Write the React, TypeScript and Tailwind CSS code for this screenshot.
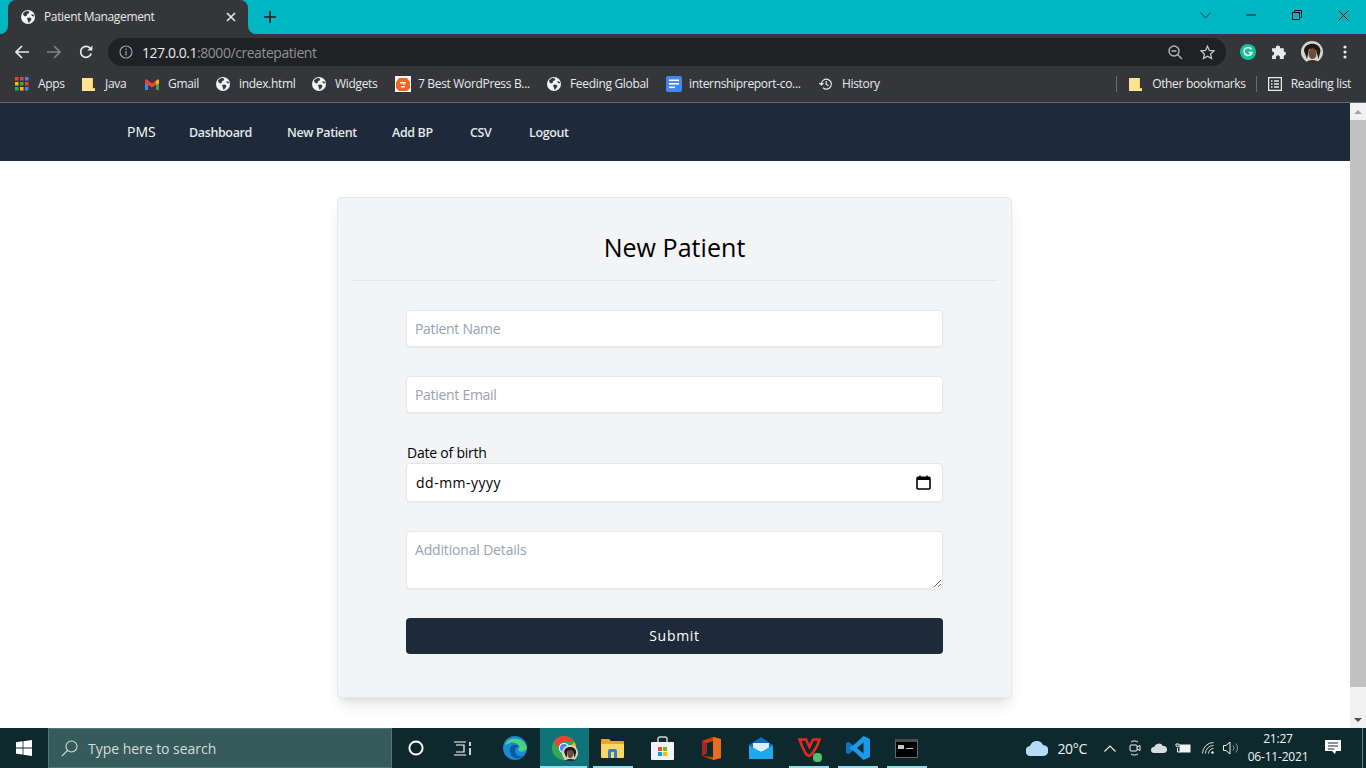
import React from "react";

const Globe = () => (
  <svg width="14" height="14" viewBox="0 0 14 14" className="shrink-0">
    <circle cx="7" cy="7" r="7" fill="#f1f3f4" />
    <path d="M2 3.2 L5.2 1 L8.4 1.6 L7.6 3.6 L5.8 4.2 L6 5.6 L4.4 6.4 L2.6 5.4 Z M6 8 L9 7.6 L10.6 9 L9.4 11 L7.6 13 L6.8 10.4 Z M10.4 4 L13 5 L12.6 6.6 L10.8 6 Z" fill="#35363a" />
  </svg>
);

const Folder = () => (
  <svg width="13" height="15" viewBox="0 0 13 15" className="shrink-0">
    <path d="M0 1 H10 V11 H13 V14 H0 Z" fill="#fde293" />
    <path d="M10 1 H11 V11 H13 V12 H10 Z" fill="#f9cf5a" />
  </svg>
);

const AppsIcon = () => (
  <svg width="14" height="14" viewBox="0 0 14 14" className="shrink-0">
    <rect x="0" y="0" width="3.5" height="3.5" fill="#ea4335" />
    <rect x="5" y="0" width="3.5" height="3.5" fill="#ea4335" />
    <rect x="10" y="0" width="3.5" height="3.5" fill="#4285f4" />
    <rect x="0" y="5" width="3.5" height="3.5" fill="#fbbc04" />
    <rect x="5" y="5" width="3.5" height="3.5" fill="#34a853" />
    <rect x="10" y="5" width="3.5" height="3.5" fill="#ea4335" />
    <rect x="0" y="10" width="3.5" height="3.5" fill="#34a853" />
    <rect x="5" y="10" width="3.5" height="3.5" fill="#fbbc04" />
    <rect x="10" y="10" width="3.5" height="3.5" fill="#4285f4" />
  </svg>
);

const GmailIcon = () => (
  <svg width="14" height="11" viewBox="0 0 14 11" className="shrink-0">
    <path d="M0 1 V11 H3 V4 Z" fill="#4285f4" />
    <path d="M14 1 V11 H11 V4 Z" fill="#34a853" />
    <path d="M0 1 L1.5 0 L7 4.4 L12.5 0 L14 1 V4 L11 6 L7 8.6 L3 6 L0 4 Z" fill="#ea4335" />
    <path d="M11 2 L14 0.6 V4 L11 6 Z" fill="#fbbc04" />
  </svg>
);

const BloggerIcon = () => (
  <svg width="16" height="16" viewBox="0 0 16 16" className="shrink-0">
    <rect width="16" height="16" fill="#fff" />
    <path d="M4 2 H12 L15 6 V12 L12 15 H4 L1 12 V6 Z" fill="#f26522" />
    <rect x="5" y="6" width="6" height="1.5" fill="#fff" />
    <rect x="6" y="10" width="4" height="1.5" fill="#fff" />
    <rect x="8" y="8" width="1.5" height="1" fill="#fff" />
  </svg>
);

const DocsIcon = () => (
  <svg width="16" height="16" viewBox="0 0 16 16" className="shrink-0">
    <rect width="16" height="16" rx="2" fill="#4285f4" />
    <rect x="3" y="3.5" width="10" height="1.6" fill="#fff" />
    <rect x="3" y="7" width="10" height="1.6" fill="#fff" />
    <rect x="3" y="10.5" width="6" height="1.6" fill="#fff" />
  </svg>
);

const HistoryIcon = () => (
  <svg width="14" height="14" viewBox="0 0 14 14" fill="none" stroke="#e8eaed" strokeWidth="1.2" className="shrink-0">
    <path d="M2.4 7 A5 5 0 1 1 4 10.8" />
    <path d="M0.4 6 L2.4 8 L4.4 6" />
    <path d="M7.2 4 V7.4 L9.6 8.8" />
  </svg>
);

const ReadingIcon = () => (
  <svg width="14" height="14" viewBox="0 0 14 14" fill="none" stroke="#e8eaed" strokeWidth="1.3" className="shrink-0">
    <rect x="0.6" y="0.6" width="12.8" height="12.8" />
    <path d="M3 4 H4.5 M6 4 H11 M3 7 H4.5 M6 7 H11 M3 10 H4.5 M6 10 H11" />
  </svg>
);

const Avatar = ({ size }: { size: number }) => (
  <svg width={size} height={size} viewBox="0 0 22 22" className="shrink-0">
    <circle cx="11" cy="11" r="11" fill="#d8d4ce" />
    <path d="M3 10 C3 1 19 0 19.5 10 L17.5 18 L15 9 L8 8 L6 18 Z" fill="#1f1a17" />
    <ellipse cx="11.5" cy="12.5" rx="4" ry="5.5" fill="#6e4c3c" />
    <path d="M5 22 C6 18 17 18 18 22 Z" fill="#3a2e2a" />
  </svg>
);

const Bookmark = ({ icon, label, cls }: { icon: React.ReactNode; label: string; cls: string }) => (
  <div className={`flex items-center ${cls}`}>
    <div className="w-[23px] flex items-center shrink-0">{icon}</div>
    <span className="whitespace-nowrap">{label}</span>
  </div>
);

const Field = ({ placeholder }: { placeholder: string }) => (
  <input
    placeholder={placeholder}
    className="block w-full h-[37px] bg-white border border-gray-200 rounded shadow-xs px-2 text-sm tracking-[-0.3px] placeholder:text-gray-400 outline-none"
  />
);

const Tile = ({ children, line, active }: { children?: React.ReactNode; line?: string; active?: boolean }) => (
  <div className={`relative w-[49px] h-10 flex items-center justify-center shrink-0 ${active ? "bg-[#0e7477]" : ""}`}>
    {children}
    {line === "full" && <div className="absolute bottom-0 left-0 w-[47px] h-[2px] bg-[#8fdfe6]" />}
    {line === "open" && <div className="absolute bottom-0 left-[4px] w-[40px] h-[2px] bg-[#8fdfe6]" />}
  </div>
);

export default function App() {
  return (
    <div className="w-[1366px] h-[768px] overflow-hidden flex flex-col bg-white font-['Open_Sans',sans-serif]">
      {/* tab strip */}
      <div className="h-[34px] bg-[#00b7c3] flex shrink-0 pl-2 text-[12px] text-[#e8eaed]">
        <div className="relative w-[240px] h-[34px] bg-[#35363a] rounded-t-lg flex items-center pl-[13px]">
          <svg width="8" height="8" className="absolute left-[-8px] bottom-0"><path d="M8 0 A8 8 0 0 1 0 8 H8 Z" fill="#35363a" /></svg>
          <svg width="8" height="8" className="absolute right-[-8px] bottom-0"><path d="M0 0 A8 8 0 0 0 8 8 H0 Z" fill="#35363a" /></svg>
          <Globe />
          <span className="ml-[9px] tracking-[-0.36px] whitespace-nowrap">Patient Management</span>
          <svg width="10" height="10" viewBox="0 0 10 10" className="ml-[72px]" stroke="#e8eaed" strokeWidth="1.6"><path d="M1 1 L9 9 M9 1 L1 9" /></svg>
        </div>
        <div className="ml-[15px] h-[34px] flex items-center">
          <svg width="14" height="14" viewBox="0 0 14 14" stroke="#202124" strokeWidth="1.7"><path d="M7 1 V13 M1 7 H13" /></svg>
        </div>
        <div className="ml-auto flex h-[30px] items-center">
          <div className="w-[46px] flex justify-center">
            <svg width="11" height="7" viewBox="0 0 11 7" fill="none" stroke="#203a40"><path d="M0.5 0.5 L5.5 6 L10.5 0.5" /></svg>
          </div>
          <div className="w-[46px] flex justify-center">
            <svg width="10" height="2" viewBox="0 0 10 2" stroke="#111"><path d="M0 1 H10" /></svg>
          </div>
          <div className="w-[46px] flex justify-center">
            <svg width="10" height="10" viewBox="0 0 10 10" fill="none" stroke="#111"><rect x="0.5" y="2.5" width="7" height="7" /><path d="M2.5 2.5 V0.5 H9.5 V7.5 H7.5" /></svg>
          </div>
          <div className="w-[46px] flex justify-center">
            <svg width="11" height="11" viewBox="0 0 11 11" stroke="#111"><path d="M0.5 0.5 L10.5 10.5 M10.5 0.5 L0.5 10.5" /></svg>
          </div>
        </div>
      </div>

      {/* toolbar */}
      <div className="h-[32px] bg-[#35363a] flex items-end shrink-0">
        <div className="w-[108px] h-[28px] flex items-center pl-[15px] gap-[18px]">
          <svg width="14" height="14" viewBox="0 0 14 14" fill="none" stroke="#e8eaed" strokeWidth="1.7"><path d="M14 7 H1.5 M7 1 L1 7 L7 13" /></svg>
          <svg width="14" height="14" viewBox="0 0 14 14" fill="none" stroke="#7f8184" strokeWidth="1.7"><path d="M0 7 H12.5 M7 1 L13 7 L7 13" /></svg>
          <svg width="14" height="14" viewBox="0 0 14 14" fill="none" stroke="#e8eaed" strokeWidth="1.7"><path d="M12.2 8.4 A5.4 5.4 0 1 1 11 3.2" /><path d="M13.4 0.6 V5.6 H8.4 Z" fill="#e8eaed" stroke="none" /></svg>
        </div>
        <div className="w-[1118px] h-[28px] bg-[#202124] rounded-full flex items-center pl-[11px] pr-[11px]">
          <svg width="14" height="14" viewBox="0 0 14 14" fill="none" stroke="#9aa0a6" strokeWidth="1.2" className="shrink-0"><circle cx="7" cy="7" r="6" /><path d="M7 6 V10.5 M7 3.6 V5" /></svg>
          <span className="ml-[9px] text-[14px] tracking-[-0.45px] text-[#e8eaed]">127.0.0.1<span className="text-[#8f9296]">:8000/createpatient</span></span>
          <svg width="15" height="15" viewBox="0 0 15 15" fill="none" stroke="#b5b8bb" strokeWidth="1.4" className="ml-auto"><circle cx="6" cy="6" r="5" /><path d="M9.8 9.8 L14 14 M3.5 6 H8.5" /></svg>
          <svg width="15" height="15" viewBox="0 0 15 15" fill="none" stroke="#c4c7c9" strokeWidth="1.3" className="ml-[17px]"><path d="M7.5 1.2 L9.4 5.4 L14 5.9 L10.6 9 L11.5 13.6 L7.5 11.3 L3.5 13.6 L4.4 9 L1 5.9 L5.6 5.4 Z" /></svg>
        </div>
        <div className="flex-1 h-[28px] flex items-center pl-[14px]">
          <svg width="16" height="16" viewBox="0 0 16 16" fill="none"><circle cx="8" cy="8" r="8" fill="#15c39a" /><path d="M11.4 5.2 A4 4 0 1 0 12 8.4 H8.6" stroke="#fff" strokeWidth="1.5" /></svg>
          <svg width="16" height="16" viewBox="0 0 15 15" className="ml-[15px]" fill="#e8eaed"><path d="M1 4 H4.6 A2 2 0 1 1 8.4 4 H12 V7 A2 2 0 1 1 12 11 V14 H8 A2 2 0 1 0 5 14 H1 V11 A2 2 0 1 0 1 7 Z" /></svg>
          <div className="ml-[14px]"><Avatar size={22} /></div>
          <svg width="4" height="14" viewBox="0 0 4 14" fill="#e8eaed" className="ml-[20px]"><circle cx="2" cy="2" r="1.6" /><circle cx="2" cy="7" r="1.6" /><circle cx="2" cy="12" r="1.6" /></svg>
        </div>
      </div>

      {/* bookmarks */}
      <div className="h-[37px] bg-[#35363a] border-b border-[#68696c] flex items-center shrink-0 pl-[15px] text-[12px] tracking-[-0.33px] text-[#e8eaed]">
        <Bookmark icon={<AppsIcon />} label="Apps" cls="w-[67px]" />
        <Bookmark icon={<Folder />} label="Java" cls="w-[63px]" />
        <Bookmark icon={<GmailIcon />} label="Gmail" cls="w-[71px]" />
        <Bookmark icon={<Globe />} label="index.html" cls="w-[96px]" />
        <Bookmark icon={<Globe />} label="Widgets" cls="w-[83px]" />
        <Bookmark icon={<BloggerIcon />} label="7 Best WordPress B..." cls="w-[152px]" />
        <Bookmark icon={<Globe />} label="Feeding Global" cls="w-[119px]" />
        <Bookmark icon={<DocsIcon />} label="internshipreport-co..." cls="w-[153px]" />
        <Bookmark icon={<HistoryIcon />} label="History" cls="w-[60px]" />
        <div className="ml-auto flex items-center pr-[15px]">
          <div className="w-px h-4 bg-[#6a6b6e] mr-[12px]" />
          <Bookmark icon={<Folder />} label="Other bookmarks" cls="" />
          <div className="w-px h-4 bg-[#6a6b6e] ml-[10px] mr-[11px]" />
          <Bookmark icon={<ReadingIcon />} label="Reading list" cls="" />
        </div>
      </div>

      {/* page */}
      <div className="flex-1 flex min-h-0">
        <div className="flex-1 min-w-0 bg-white">
          <nav className="h-[58px] bg-gray-800 flex items-center pl-[127px] text-[12.5px] leading-5 font-semibold text-gray-200 tracking-[-0.37px]">
            <span className="w-[62px] text-[14px] font-medium tracking-normal text-white">PMS</span>
            <div className="flex items-center pt-[2px]">
              <span className="w-[98px]">Dashboard</span>
              <span className="w-[105px]">New Patient</span>
              <span className="w-[78px]">Add BP</span>
              <span className="w-[59px]">CSV</span>
              <span>Logout</span>
            </div>
          </nav>
          <div className="ml-[337px] mt-9 w-[675px] h-[501px] bg-gray-100 border border-gray-200 rounded shadow-lg px-[14px]">
            <div className="h-[83px] border-b border-gray-200 flex items-center justify-center pt-[17px]">
              <h1 className="text-[25px] tracking-[0.05px] text-black">New Patient</h1>
            </div>
            <form className="mx-[54px] pt-[29px]">
              <Field placeholder="Patient Name" />
              <div className="mt-[29px]"><Field placeholder="Patient Email" /></div>
              <label className="block mt-[30px] ml-px text-[14px] tracking-[-0.22px] leading-[20px] text-black">Date of birth</label>
              <div className="h-[39px] bg-white border border-gray-200 rounded shadow-xs pl-[9px] pr-[11px] flex items-center justify-between text-sm tracking-[0.5px] text-black">
                <span>dd-mm-yyyy</span>
                <svg width="15" height="15" viewBox="0 0 15 15" fill="none"><rect x="1" y="2.4" width="13" height="11.6" rx="1" stroke="#000" strokeWidth="1.6" /><rect x="1" y="2" width="13" height="3" fill="#000" /><path d="M4 0.6 V3 M11 0.6 V3" stroke="#000" strokeWidth="1.4" /></svg>
              </div>
              <textarea
                placeholder="Additional Details"
                className="block mt-[29px] w-full h-[58px] bg-white border border-gray-200 rounded shadow-xs px-2 py-2 text-sm tracking-[-0.17px] placeholder:text-gray-400 outline-none"
              />
              <button type="button" className="block mt-[29px] w-full h-9 bg-gray-800 rounded text-white text-sm font-medium tracking-wider">Submit</button>
            </form>
          </div>
        </div>
        <div className="w-4 bg-[#f1f1f1] flex flex-col shrink-0">
          <div className="h-[17px] flex items-center justify-center">
            <div className="w-0 h-0 border-x-4 border-x-transparent border-b-4 border-b-[#a3a3a3]" />
          </div>
          <div className="h-[567px] bg-[#c1c1c1]" />
          <div className="flex-1" />
          <div className="h-[17px] flex items-center justify-center">
            <div className="w-0 h-0 border-x-4 border-x-transparent border-t-4 border-t-[#505050]" />
          </div>
        </div>
      </div>

      {/* taskbar */}
      <div className="h-10 bg-[#0e292d] flex items-center shrink-0 text-white">
        <div className="w-12 flex justify-center">
          <svg width="16" height="16" viewBox="0 0 16 16" fill="#fff"><path d="M0 2.3 L6.6 1.3 V7.5 H0 Z M7.4 1.2 L16 0 V7.5 H7.4 Z M0 8.4 H6.6 V14.6 L0 13.7 Z M7.4 8.4 H16 V16 L7.4 14.8 Z" /></svg>
        </div>
        <div className="w-[344px] h-10 bg-[#355b5d] border border-[#54767a] flex items-center pl-[12px] text-[14px] tracking-[-0.03px] text-[#d5dcdc]">
          <svg width="17" height="17" viewBox="0 0 17 17" fill="none" stroke="#d5dcdc" strokeWidth="1.1"><circle cx="10.5" cy="6.5" r="5.5" /><path d="M6.5 10.5 L0.8 16.2" /></svg>
          <span className="ml-[10px]">Type here to search</span>
        </div>
        <div className="ml-[1px] flex">
          <Tile>
            <svg width="16" height="16" viewBox="0 0 16 16" fill="none" stroke="#fff" strokeWidth="2" className="mr-[4px]"><circle cx="8" cy="8" r="6.6" /></svg>
          </Tile>
          <Tile>
            <svg width="18" height="15" viewBox="0 0 18 15" fill="none" stroke="#fff" strokeWidth="1.2" className="mr-[8px]"><path d="M0 1 H12 M2 4 H10 V11 H2 M0 14 H12" /><path d="M16 1 V5 M16 7 V14" strokeWidth="1.6" /></svg>
          </Tile>
          <Tile>
            <svg width="24" height="24" viewBox="0 0 24 24" className="mr-[2px]"><circle cx="12" cy="12" r="12" fill="#1b89d6" /><path d="M2 9 C5 0 20 0 24 11 C24 16 17 17 15 14 C19 10 12 5 7 7 C4 8 3 9 2 9 Z" fill="#49d57f" /><path d="M7 13 C7 9 13 7 17 11 C14 10 12 12 12 15 C12 19 16 21 20 20 C15 25 6 22 7 13 Z" fill="#0c5a9e" /></svg>
          </Tile>
          <Tile active line="full">
            <div className="relative w-[24px] h-[24px] mr-[2px]">
              <svg width="24" height="24" viewBox="0 0 24 24"><circle cx="12" cy="12" r="12" fill="#34a853" /><path d="M12 0 A12 12 0 0 1 22.4 6 L12 6 L5 11 L2 5.4 A12 12 0 0 1 12 0 Z" fill="#ea4335" /><path d="M22.4 6 A12 12 0 0 1 12 24 L17 12 Z" fill="#fbbc04" /><circle cx="12" cy="12" r="5.2" fill="#fff" /><circle cx="12" cy="12" r="4" fill="#4285f4" /></svg>
              <div className="absolute left-[10px] top-[9px] rounded-full"><Avatar size={16} /></div>
            </div>
          </Tile>
          <Tile line="open">
            <svg width="23" height="20" viewBox="0 0 23 20" className="mr-[2px]"><path d="M0 2 A1 1 0 0 1 1 1 H8 L10 3 H22 A1 1 0 0 1 23 4 V8 H0 Z" fill="#e8a825" /><path d="M0 6 H23 V19 A1 1 0 0 1 22 20 H1 A1 1 0 0 1 0 19 Z" fill="#fcd667" /><path d="M7 13 A2 2 0 0 1 9 11 H14 A2 2 0 0 1 16 13 V20 H13 V14 H10 V20 H7 Z" fill="#2d82c9" /></svg>
          </Tile>
          <Tile>
            <svg width="23" height="24" viewBox="0 0 23 24" fill="none"><path d="M7 7 V3 A2 2 0 0 1 9 1 H14 A2 2 0 0 1 16 3 V7" stroke="#d8d8d8" strokeWidth="1.4" /><rect y="6" width="23" height="18" rx="1" fill="#f3f3f3" /><rect x="7" y="11" width="4" height="4" fill="#f25022" /><rect x="12" y="11" width="4" height="4" fill="#7fba00" /><rect x="7" y="16" width="4" height="4" fill="#00a4ef" /><rect x="12" y="16" width="4" height="4" fill="#ffb900" /></svg>
          </Tile>
          <Tile>
            <svg width="19" height="23" viewBox="0 0 19 23"><path d="M0 4 L11 0 L19 2 V21 L11 23 L0 19 L11 20 V4 L5 6 V16 L0 19 Z" fill="#d83b01" /><path d="M11 0 L19 2 V21 L11 23 Z" fill="#eb6c1f" /><path d="M0 4 L5 6 V16 L0 19 Z" fill="#a4262c" /></svg>
          </Tile>
          <Tile>
            <svg width="24" height="22" viewBox="0 0 24 22"><path d="M0 8 L12 0 L24 8 L12 15 Z" fill="#0f6cbd" /><path d="M4 6 H20 V12 L12 15 L4 12 Z" fill="#dbeffb" /><path d="M0 8 L12 15 L24 8 V22 H0 Z" fill="#20a8ee" /></svg>
          </Tile>
          <Tile line="open">
            <div className="relative">
              <svg width="23" height="20" viewBox="0 0 23 20" fill="none"><path d="M1.5 1.5 H8 L11.5 9 L15 1.5 H21.5 L19 8 L14 16 L11 18 L8 16 L4 8 Z" stroke="#e8281f" strokeWidth="2.6" /></svg>
              <div className="absolute right-[-1px] bottom-[-4px] w-[9px] h-[9px] rounded-sm bg-[#4fc26d]" />
            </div>
          </Tile>
          <Tile line="open">
            <svg width="24" height="24" viewBox="0 0 24 24" className="mr-[2px]"><path d="M17.5 0 L24 3 V21 L17.5 24 L7 14.5 L2.5 18 L0 16.5 V7.5 L2.5 6 L7 9.5 Z M17.5 6.5 L11 12 L17.5 17.5 Z" fill="#1a9ae8" /><path d="M2.5 6 L7 9.5 L3 12 L7 14.5 L2.5 18 L0 16.5 V7.5 Z" fill="#0d73bb" /></svg>
          </Tile>
          <Tile line="open">
            <div className="w-[23px] h-[19px] mr-[2px] bg-black border border-[#666] border-t-[3px] border-t-[#4c4c4c] flex items-start pt-[3px] pl-[2px]">
              <div className="w-[6px] h-[4px] bg-[#c8c8c8]" />
              <div className="ml-[2px] mt-[3px] w-[7px] h-[1px] bg-[#c8c8c8]" />
            </div>
          </Tile>
        </div>

        <div className="ml-auto flex items-center h-10 text-[#f0f3f3]">
          <svg width="22" height="16" viewBox="0 0 22 16"><path d="M5 16 A5 5 0 0 1 4 6 A7 7 0 0 1 17 5 A5.5 5.5 0 0 1 17 16 Z" fill="#b6dcf5" /></svg>
          <span className="ml-[9px] text-[14px] tracking-[-0.3px]">20°C</span>
          <svg width="12" height="7" viewBox="0 0 12 7" fill="none" stroke="#f0f3f3" strokeWidth="1.1" className="ml-[17px]"><path d="M0.5 6.5 L6 1 L11.5 6.5" /></svg>
          <svg width="12" height="16" viewBox="0 0 12 16" fill="none" stroke="#f0f3f3" strokeWidth="1" className="ml-[13px]"><rect x="1" y="5" width="7" height="6" rx="1" /><path d="M8 7 L11 5.5 V10.5 L8 9 M2 2 C4 0.6 7 0.6 9 2 M2 14 C4 15.4 7 15.4 9 14" /></svg>
          <svg width="16" height="10" viewBox="0 0 16 10" fill="#d7dcdc" className="ml-[10px]"><path d="M3 10 A3 3 0 0 1 3 4 A5 5 0 0 1 12 3 A3.5 3.5 0 0 1 13 10 Z" /></svg>
          <svg width="16" height="12" viewBox="0 0 16 12" fill="none" stroke="#f0f3f3" className="ml-[8px]"><path d="M1 2 V4 A2 2 0 0 0 4 4 V2 M1 2 H4 M2.5 6 V10 H5" /><rect x="5" y="3" width="10" height="7" fill="#f0f3f3" /></svg>
          <svg width="14" height="12" viewBox="0 0 14 12" fill="none" stroke="#d7dcdc" className="ml-[11px]"><path d="M0.5 11.5 A11 11 0 0 1 11.5 0.5 M3.5 11.5 A8 8 0 0 1 11.5 3.5 M6.5 11.5 A5 5 0 0 1 11.5 6.5" /><circle cx="10.5" cy="10.5" r="1.2" fill="#fff" stroke="none" /></svg>
          <svg width="16" height="14" viewBox="0 0 16 14" fill="none" stroke="#f0f3f3" className="ml-[7px]"><path d="M0.5 4.5 H3 L7 1 V13 L3 9.5 H0.5 Z" /><path d="M10 4.5 A3.5 3.5 0 0 1 10 9.5 M12.5 2.5 A6 6 0 0 1 12.5 11.5" stroke="#8a9a9c" /></svg>
          <div className="ml-[4px] w-[70px] flex flex-col items-center text-[12px] leading-[18px] tracking-[-0.2px]">
            <span>21:27</span>
            <span>06-11-2021</span>
          </div>
          <svg width="17" height="16" viewBox="0 0 17 16" className="ml-[12px]" fill="#fff"><path d="M0 0 H16 V11 H11 L10 14 L7 11 H0 Z" /><path d="M3 3 H13 M3 6 H13 M3 9 H9" stroke="#0e292d" /></svg>
          <div className="ml-[20px] mr-[3px] w-px h-10 bg-[#6b8084]" />
        </div>
      </div>
    </div>
  );
}
